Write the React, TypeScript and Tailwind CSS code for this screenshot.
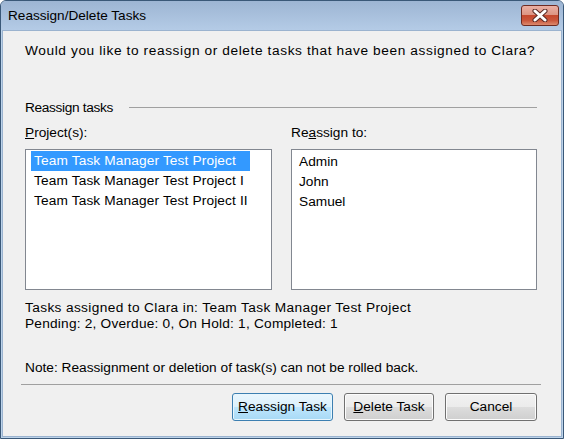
import React from 'react';

const font = { fontFamily: '"Liberation Sans", Arial, sans-serif' };

const projects = ['Team Task Manager Test Project', 'Team Task Manager Test Project I', 'Team Task Manager Test Project II'];
const users = ['Admin', 'John', 'Samuel'];

const Btn: React.FC<{ children: React.ReactNode; primary?: boolean; className?: string }> = ({ children, primary, className = '' }) => (
  <button
    className={`h-[28px] rounded-[3px] border text-[13.7px] text-black flex items-center justify-center ${primary ? 'border-[#3c7fb1] bg-[linear-gradient(#eaf6fd_0%,#d9f0fc_50%,#bee6fd_50%,#a7d9f5_100%)] shadow-[inset_0_0_0_1px_#e8f6fd]' : 'border-[#707070] bg-[linear-gradient(#f2f2f2_0%,#ebebeb_50%,#dddddd_50%,#cfcfcf_100%)] shadow-[inset_0_0_0_1px_#fcfcfc]'} ${className}`}
  >
    {children}
  </button>
);

export default function App() {
  return (
    <div className="w-[564px] h-[439px] overflow-hidden bg-white" style={font}>
      <div className="w-full h-full flex flex-col rounded-t-[6px] border border-[#3a5878] bg-[#bcd3ea]">
        {/* title bar */}
        <div className="h-[29px] shrink-0 flex items-start justify-between pl-[7px] pr-[4px] rounded-t-[5px] bg-[linear-gradient(#9db5d3,#b4cbe6)]">
          <span className="text-[13.6px] text-black mt-[7px] leading-[16px]">Reassign/Delete Tasks</span>
          <div className="mt-[4px] w-[38px] h-[21px] rounded-[3px] border border-[#6e2b22] bg-[linear-gradient(#eab0a4_0%,#dd9584_45%,#c5482e_50%,#c9553b_75%,#dc8a6e_100%)] flex items-center justify-center">
            <svg width="16" height="13" viewBox="0 0 16 13">
              <path d="M3 2 L13 11 M13 2 L3 11" stroke="#5a2a24" strokeWidth="5" strokeLinecap="round" />
              <path d="M3 2 L13 11 M13 2 L3 11" stroke="#ffffff" strokeWidth="3" strokeLinecap="round" />
            </svg>
          </div>
        </div>
        {/* body */}
        <div className="flex-1 mx-[1px] mb-[1px] border border-[#9bb3cf] bg-[#f0f0f0] flex flex-col pl-[22px] pr-[24px] text-[13.7px] leading-[16px] text-black">
          <div className="mt-[12px] tracking-[0.6px] whitespace-nowrap">Would you like to reassign or delete tasks that have been assigned to Clara?</div>
          <div className="mt-[41px] flex items-center gap-[16px]">
            <span className="tracking-[-0.35px]">Reassign tasks</span>
            <div className="flex-1 h-0 border-t border-[#a0a0a0] mt-[-1px]" />
          </div>
          <div className="mt-[9px] grid grid-cols-[247px_246px] gap-x-[19px]">
            <span>
              <span className="underline">P</span>roject(s):
            </span>
            <span>
              Re<span className="underline">a</span>ssign to:
            </span>
            <div className="mt-[8px] h-[141px] bg-white border border-[#828790] pt-[1px] pl-[5px]">
              <div className="w-fit tracking-[0.13px]">
                {projects.map((p, i) => (
                  <div key={p} className={`h-[20px] flex items-center pl-[3px] pr-[2px] whitespace-nowrap ${i === 0 ? 'bg-[#3399ff] text-white' : ''}`}>
                    {p}
                  </div>
                ))}
              </div>
            </div>
            <div className="mt-[8px] h-[141px] bg-white border border-[#828790] pt-[2px] pl-[7px]">
              {users.map((u) => (
                <div key={u} className="h-[20px] flex items-center">
                  {u}
                </div>
              ))}
            </div>
          </div>
          <div className="mt-[10px] tracking-[0.36px]">Tasks assigned to Clara in: Team Task Manager Test Project</div>
          <div className="tracking-[0.21px]">Pending: 2, Overdue: 0, On Hold: 1, Completed: 1</div>
          <div className="mt-[28px]">Note: Reassignment or deletion of task(s) can not be rolled back.</div>
          <div className="mt-[8px] ml-[-4px] mr-[-4px] border-t border-[#a0a0a0]" />
          <div className="mt-[8px] flex justify-end gap-[11px]">
            <Btn primary className="w-[101px]">
              <span className="underline">R</span>eassign Task
            </Btn>
            <Btn className="w-[90px]">
              <span className="underline">D</span>elete Task
            </Btn>
            <Btn className="w-[92px]">Cancel</Btn>
          </div>
        </div>
      </div>
    </div>
  );
}
